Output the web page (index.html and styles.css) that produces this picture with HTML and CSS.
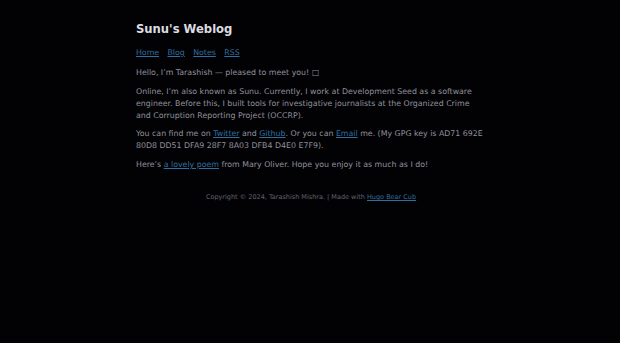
FILE: index.html
```html
<!DOCTYPE html>
<html lang="en">
<head>
  <meta charset="UTF-8" />
  <meta name="viewport" content="width=device-width, initial-scale=1.0"/>
  <title>Sunu's Weblog</title>
  <link rel="stylesheet" href="styles.css">
</head>
<body>
  <header>
    <a class="title" href="#"><h2>Sunu's Weblog</h2></a>
    <nav>
      <a href="#">Home</a>
      <a href="#">Blog</a>
      <a href="#">Notes</a>
      <a href="#">RSS</a>
    </nav>
  </header>

  <main>
    <p>Hello, I’m Tarashish — pleased to meet you! □</p>
    <p>Online, I’m also known as Sunu. Currently, I work at Development Seed as a software engineer. Before this, I built tools for investigative journalists at the Organized Crime and Corruption Reporting Project (OCCRP).</p>
    <p>You can find me on <a href="#">Twitter</a> and <a href="#">Github</a>. Or you can <a href="#">Email</a> me. (My GPG key is AD71 692E 80D8 DD51 DFA9 28F7 8A03 DFB4 D4E0 E7F9).</p>
    <p>Here’s <a href="#">a lovely poem</a> from Mary Oliver. Hope you enjoy it as much as I do!</p>
  </main>

  <footer>
    Copyright © 2024, Tarashish Mishra. | Made with <a href="#">Hugo Bear Cub</a>
  </footer>
</body>
</html>
```
FILE: styles.css
```css
body {
  margin: 0 auto;
  padding: 10px 0 0 2px;
  max-width: 350px;
  font-family: "DejaVu Sans", Verdana, sans-serif;
  font-size: 7.85px;
  line-height: 12px;
  background-color: #020205;
  color: #90909a;
}

a {
  color: #2f6e9f;
}

.title {
  text-decoration: none;
}

.title h2 {
  margin: 11px 0 10px;
  font-size: 11.6px;
  line-height: 16px;
  color: #dcdce0;
}

nav {
  margin-bottom: 8px;
  font-size: 7.8px;
}

nav a {
  margin-right: 6px;
}

p {
  margin: 0 0 6.7px;
}

footer {
  margin-top: 20px;
  text-align: center;
  font-size: 6.5px;
  color: #62626c;
}
```
